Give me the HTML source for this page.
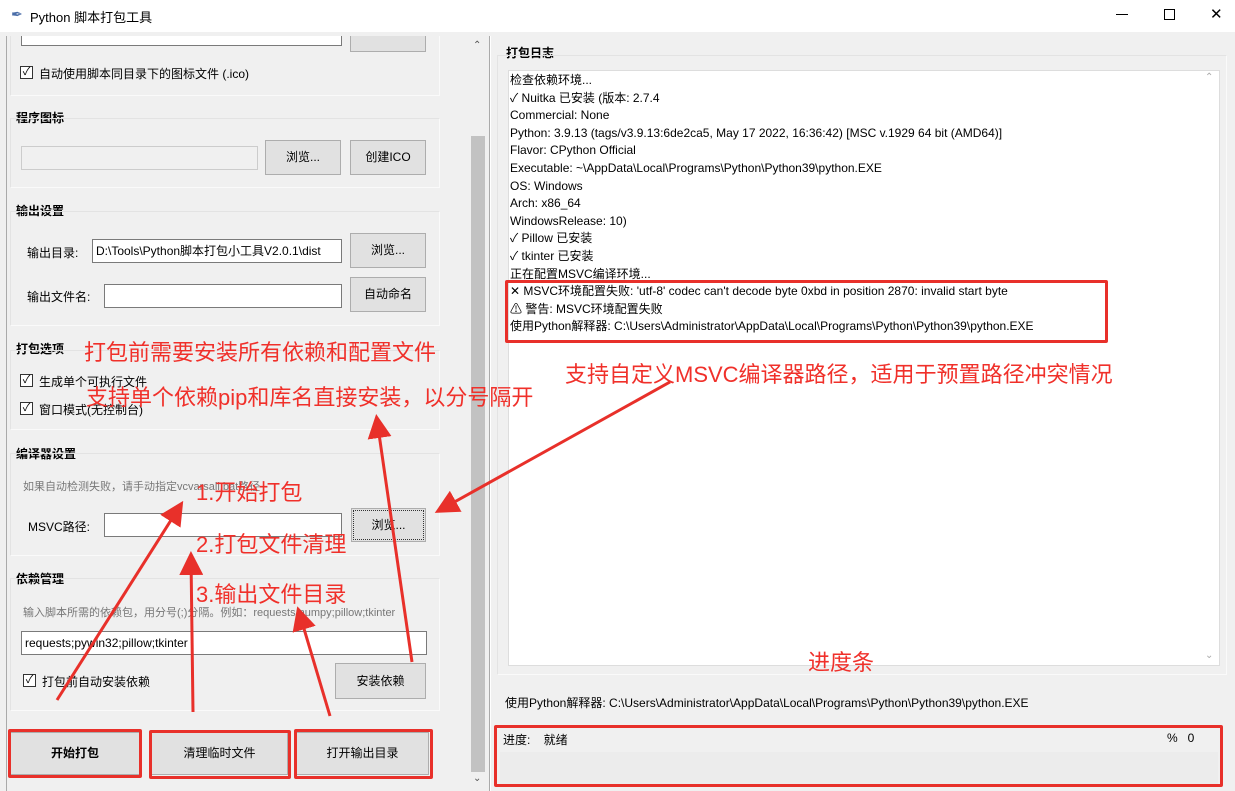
<!DOCTYPE html>
<html><head><meta charset="utf-8"><style>
*{margin:0;padding:0;box-sizing:border-box}
body{width:1235px;height:791px;overflow:hidden;background:#f0f0f0;font-family:"Liberation Sans","Noto Sans CJK SC",sans-serif;font-size:12px;color:#000;position:relative}
.a{position:absolute}
.t{position:absolute;white-space:nowrap}
.btn{position:absolute;background:#e1e1e1;border:1px solid #adadad;text-align:center;font-size:12px}
.inp{position:absolute;background:#fff;border:1px solid #7a7a7a}
.grp{position:absolute;border:1px solid #e3e3e3;border-right-color:#fafafa;border-bottom-color:#fafafa}
.cb{position:absolute;width:13px;height:13px;border:1px solid #333;background:#fff;font-size:11px;line-height:11px;text-align:center}
.h{font-weight:bold;font-size:12px}
.red{color:#f0302a;font-size:22px}
.rb{position:absolute;border:3px solid #e8302a;border-radius:2px}
.log div{height:17.6px;line-height:17.6px}
</style></head><body>
<div class="a" style="left:0;top:0;width:1235px;height:32px;background:#fff"></div>
<div class="t" style="left:11px;top:6px;font-size:14px;color:#4a6da8">&#10002;</div>
<div class="t" style="left:30px;top:7px;font-size:13px">Python 脚本打包工具</div>
<div class="a" style="left:1116px;top:14px;width:12px;height:1px;background:#000"></div>
<div class="a" style="left:1164px;top:9px;width:11px;height:11px;border:1px solid #000"></div>
<div class="t" style="left:1210px;top:5px;font-size:15px">&#10005;</div>

<!-- left pane -->
<div class="a" style="left:6px;top:36px;width:1px;height:755px;background:#aaa"></div>
<div class="a" style="left:470px;top:36px;width:16px;height:744px;background:#f0f0f0"></div>
<div class="a" style="left:471px;top:136px;width:14px;height:636px;background:#c2c2c2"></div>
<div class="t" style="left:473px;top:40px;font-size:10px;color:#555">&#8963;</div>
<div class="t" style="left:473px;top:773px;font-size:10px;color:#555">&#8964;</div>

<div class="inp" style="left:21px;top:36px;width:321px;height:10px;border-top:none"></div>
<div class="btn" style="left:350px;top:36px;width:76px;height:16px;border-top:none"></div>
<div class="grp" style="left:10px;top:36px;width:430px;height:60px;border-top:none"></div>
<div class="cb" style="left:20px;top:66px">✓</div>
<div class="t" style="left:39px;top:65px">自动使用脚本同目录下的图标文件 (.ico)</div>

<div class="t h" style="left:16px;top:109px">程序图标</div>
<div class="grp" style="left:10px;top:118px;width:430px;height:70px"></div>
<div class="inp" style="left:21px;top:146px;width:237px;height:24px;background:#f0f0f0;border-color:#ccc"></div>
<div class="btn" style="left:265px;top:140px;width:76px;height:35px;line-height:33px">浏览...</div>
<div class="btn" style="left:350px;top:140px;width:76px;height:35px;line-height:33px">创建ICO</div>

<div class="t h" style="left:16px;top:202px">输出设置</div>
<div class="grp" style="left:10px;top:211px;width:430px;height:115px"></div>
<div class="t" style="left:27px;top:244px">输出目录:</div>
<div class="inp" style="left:92px;top:239px;width:250px;height:24px;line-height:22px;padding-left:3px;overflow:hidden;white-space:nowrap">D:\Tools\Python脚本打包小工具V2.0.1\dist</div>
<div class="btn" style="left:350px;top:233px;width:76px;height:35px;line-height:33px">浏览...</div>
<div class="t" style="left:27px;top:288px">输出文件名:</div>
<div class="inp" style="left:104px;top:284px;width:238px;height:24px"></div>
<div class="btn" style="left:350px;top:277px;width:76px;height:35px;line-height:33px">自动命名</div>

<div class="t h" style="left:16px;top:340px">打包选项</div>
<div class="grp" style="left:10px;top:350px;width:430px;height:80px"></div>
<div class="cb" style="left:20px;top:374px">✓</div>
<div class="t" style="left:39px;top:373px">生成单个可执行文件</div>
<div class="cb" style="left:20px;top:402px">✓</div>
<div class="t" style="left:39px;top:401px">窗口模式(无控制台)</div>

<div class="t h" style="left:16px;top:445px">编译器设置</div>
<div class="grp" style="left:10px;top:453px;width:430px;height:103px"></div>
<div class="t" style="left:23px;top:478px;font-size:11px;color:#777">如果自动检测失败，请手动指定vcvarsall.bat路径</div>
<div class="t" style="left:28px;top:518px">MSVC路径:</div>
<div class="inp" style="left:104px;top:513px;width:238px;height:24px"></div>
<div class="btn" style="left:351px;top:508px;width:75px;height:34px;line-height:32px;outline:1px dotted #333;outline-offset:-3px">浏览...</div>

<div class="t h" style="left:16px;top:570px">依赖管理</div>
<div class="grp" style="left:10px;top:578px;width:430px;height:133px"></div>
<div class="t" style="left:23px;top:604px;font-size:11px;color:#777">输入脚本所需的依赖包，用分号(;)分隔。例如：requests;numpy;pillow;tkinter</div>
<div class="inp" style="left:21px;top:631px;width:406px;height:24px;line-height:22px;padding-left:3px">requests;pywin32;pillow;tkinter</div>
<div class="cb" style="left:23px;top:674px">✓</div>
<div class="t" style="left:42px;top:673px">打包前自动安装依赖</div>
<div class="btn" style="left:335px;top:663px;width:91px;height:36px;line-height:34px">安装依赖</div>

<div class="btn" style="left:10px;top:732px;width:130px;height:43px;line-height:41px;font-weight:bold">开始打包</div>
<div class="btn" style="left:151px;top:732px;width:137px;height:43px;line-height:41px">清理临时文件</div>
<div class="btn" style="left:296px;top:732px;width:133px;height:43px;line-height:41px">打开输出目录</div>

<!-- right pane -->
<div class="a" style="left:489px;top:36px;width:2px;height:755px;background:#fff;border-left:1px solid #aaa"></div>
<div class="t h" style="left:506px;top:44px">打包日志</div>
<div class="grp" style="left:497px;top:55px;width:730px;height:620px"></div>
<div class="a" style="left:508px;top:70px;width:712px;height:596px;background:#fff;border:1px solid #ddd"></div>
<div class="t" style="left:1205px;top:72px;font-size:10px;color:#aaa">&#8963;</div>
<div class="t" style="left:1205px;top:650px;font-size:10px;color:#aaa">&#8964;</div>
<div class="a log" style="left:510px;top:72px;font-size:12px">
<div>检查依赖环境...</div>
<div>✓ Nuitka 已安装 (版本: 2.7.4</div>
<div>Commercial: None</div>
<div>Python: 3.9.13 (tags/v3.9.13:6de2ca5, May 17 2022, 16:36:42) [MSC v.1929 64 bit (AMD64)]</div>
<div>Flavor: CPython Official</div>
<div>Executable: ~\AppData\Local\Programs\Python\Python39\python.EXE</div>
<div>OS: Windows</div>
<div>Arch: x86_64</div>
<div>WindowsRelease: 10)</div>
<div>✓ Pillow 已安装</div>
<div>✓ tkinter 已安装</div>
<div>正在配置MSVC编译环境...</div>
<div>✕ MSVC环境配置失败: 'utf-8' codec can't decode byte 0xbd in position 2870: invalid start byte</div>
<div>⚠ 警告: MSVC环境配置失败</div>
<div>使用Python解释器: C:\Users\Administrator\AppData\Local\Programs\Python\Python39\python.EXE</div>
</div>
<div class="t" style="left:505px;top:694px">使用Python解释器: C:\Users\Administrator\AppData\Local\Programs\Python\Python39\python.EXE</div>
<div class="t" style="left:503px;top:731px">进度:&nbsp;&nbsp;&nbsp;&nbsp;就绪</div>
<div class="t" style="left:1167px;top:731px">%&nbsp;&nbsp;&nbsp;0</div>
<div class="a" style="left:500px;top:752px;width:718px;height:32px;background:#ececec"></div>

<!-- annotations -->
<div class="t red" style="left:84px;top:335px">打包前需要安装所有依赖和配置文件</div>
<div class="t red" style="left:86px;top:380px">支持单个依赖pip和库名直接安装，以分号隔开</div>
<div class="t red" style="left:565px;top:357px">支持自定义MSVC编译器路径，适用于预置路径冲突情况</div>
<div class="t red" style="left:196px;top:475px">1.开始打包</div>
<div class="t red" style="left:196px;top:527px">2.打包文件清理</div>
<div class="t red" style="left:196px;top:577px">3.输出文件目录</div>
<div class="t red" style="left:808px;top:645px">进度条</div>
<div class="rb" style="left:8px;top:729px;width:134px;height:49px"></div>
<div class="rb" style="left:149px;top:730px;width:142px;height:49px"></div>
<div class="rb" style="left:294px;top:729px;width:139px;height:50px"></div>
<div class="rb" style="left:505px;top:280px;width:603px;height:63px"></div>
<div class="rb" style="left:494px;top:725px;width:729px;height:62px"></div>
<svg class="a" style="left:0;top:0" width="1235" height="791">
<defs><marker id="m" markerWidth="8" markerHeight="8" refX="6" refY="4" orient="auto"><path d="M0,0 L8,4 L0,8 Z" fill="#e8302a"/></marker></defs>
<g stroke="#e8302a" stroke-width="3" fill="none" marker-end="url(#m)">
<line x1="670" y1="382" x2="440" y2="510"/>
<line x1="412" y1="662" x2="377" y2="420"/>
<line x1="57" y1="700" x2="180" y2="506"/>
<line x1="193" y1="712" x2="191" y2="557"/>
<line x1="330" y1="716" x2="299" y2="612"/>
</g></svg>
</body></html>
